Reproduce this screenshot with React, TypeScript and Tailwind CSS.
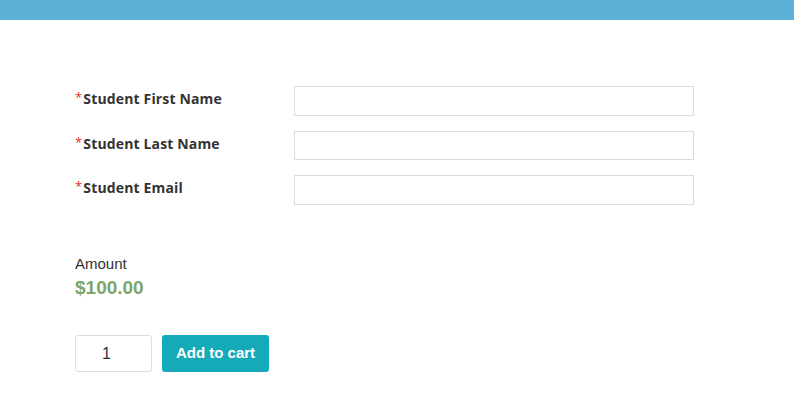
import React from "react";

const fields = [
  { label: "Student First Name", h: "h-[30px]", mb: "mb-[15px]" },
  { label: "Student Last Name", h: "h-[29px]", mb: "mb-[15px]" },
  { label: "Student Email", h: "h-[30px]", mb: "mb-0" },
];

export default function App() {
  return (
    <div className="w-[794px] h-[410px] bg-white overflow-hidden">
      <div className="h-[20px] bg-[#5bb2d6]" />
      <div className="pl-[75px] pt-[66px]">
        {fields.map((f) => (
          <div key={f.label} className={`flex items-start ${f.mb}`}>
            <div
              className="w-[219px] pt-[3px] flex items-start text-[14px] leading-[20px] font-bold text-[#333333] tracking-[0.15px]"
              style={{ fontFamily: '"Open Sans", "Liberation Sans", sans-serif' }}
            >
              <span className="text-[#e02b2b] font-normal text-[13px] leading-[16px] mr-[1px]">*</span>
              <span>{f.label}</span>
            </div>
            <input
              className={`w-[400px] ${f.h} border border-[#dddddd] bg-white outline-none`}
            />
          </div>
        ))}
        <div
          className="mt-[50px] text-[15px] leading-[18px] text-[#333333]"
          style={{ fontFamily: '"Liberation Sans", Arial, sans-serif' }}
        >
          Amount
        </div>
        <div
          className="mt-[4px] text-[19px] leading-[22px] font-bold text-[#7ba66a]"
          style={{ fontFamily: '"Liberation Sans", Arial, sans-serif' }}
        >
          $100.00
        </div>
        <div
          className="mt-[36px] flex items-center gap-[10px]"
          style={{ fontFamily: '"Liberation Sans", Arial, sans-serif' }}
        >
          <div className="w-[77px] h-[37px] border border-[#dddddd] rounded-[3px] flex items-center pl-[26px] text-[16px] text-[#333333]">
            1
          </div>
          <button className="w-[107px] h-[37px] rounded-[3px] bg-[#15aab8] text-white text-[15px] font-bold">
            Add to cart
          </button>
        </div>
      </div>
    </div>
  );
}
